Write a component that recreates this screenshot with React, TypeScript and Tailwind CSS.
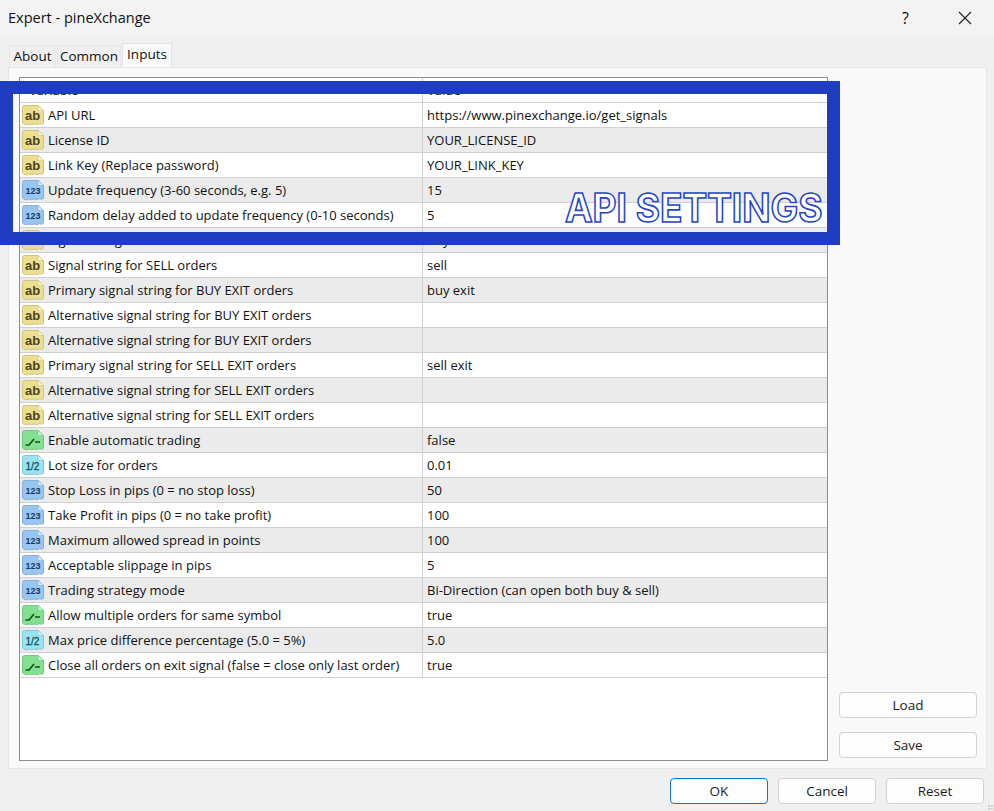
import React from 'react';

type Kind = 'ab' | 'int' | 'bool' | 'dbl';

const ROWS: [Kind, string, string][] = [
  ['ab', 'API URL', 'https://www.pinexchange.io/get_signals'],
  ['ab', 'License ID', 'YOUR_LICENSE_ID'],
  ['ab', 'Link Key (Replace password)', 'YOUR_LINK_KEY'],
  ['int', 'Update frequency (3-60 seconds, e.g. 5)', '15'],
  ['int', 'Random delay added to update frequency (0-10 seconds)', '5'],
  ['ab', 'Signal string for BUY orders', 'buy'],
  ['ab', 'Signal string for SELL orders', 'sell'],
  ['ab', 'Primary signal string for BUY EXIT orders', 'buy exit'],
  ['ab', 'Alternative signal string for BUY EXIT orders', ''],
  ['ab', 'Alternative signal string for BUY EXIT orders', ''],
  ['ab', 'Primary signal string for SELL EXIT orders', 'sell exit'],
  ['ab', 'Alternative signal string for SELL EXIT orders', ''],
  ['ab', 'Alternative signal string for SELL EXIT orders', ''],
  ['bool', 'Enable automatic trading', 'false'],
  ['dbl', 'Lot size for orders', '0.01'],
  ['int', 'Stop Loss in pips (0 = no stop loss)', '50'],
  ['int', 'Take Profit in pips (0 = no take profit)', '100'],
  ['int', 'Maximum allowed spread in points', '100'],
  ['int', 'Acceptable slippage in pips', '5'],
  ['int', 'Trading strategy mode', 'Bi-Direction (can open both buy & sell)'],
  ['bool', 'Allow multiple orders for same symbol', 'true'],
  ['dbl', 'Max price difference percentage (5.0 = 5%)', '5.0'],
  ['bool', 'Close all orders on exit signal (false = close only last order)', 'true'],
];

const COLORS: Record<Kind, { fill: string; edge: string; fold: string }> = {
  ab: { fill: '#ecdf92', edge: '#d3c477', fold: '#fbf6d2' },
  int: { fill: '#98c6f0', edge: '#82afdb', fold: '#dcebfa' },
  bool: { fill: '#84e091', edge: '#6ecb7e', fold: '#d2f4d7' },
  dbl: { fill: '#9ae3f0', edge: '#7ac8d9', fold: '#daf5fa' },
};

function TypeIcon({ kind }: { kind: Kind }) {
  const c = COLORS[kind];
  return (
    <svg width="22" height="21" viewBox="0 0 22 21" className="shrink-0">
      <path
        d="M2.5 .5H16L21.5 5.5V18C20 20.5 18 18 16.5 19C15 20.5 13 18.5 11 19.2C9 20.5 7.5 18.5 6 19.2C4.5 20.5 2 19.5 .5 18V2.5Q.5 .5 2.5 .5Z"
        fill={c.fill}
        stroke={c.edge}
      />
      <path d="M16 .5V5.5H21.5Z" fill={c.fold} stroke={c.edge} strokeWidth="0.6" />
      {kind === 'ab' && (
        <text x="3" y="14.5" fontSize="13" fontWeight="700" fill="#4a4420" fontFamily="'Liberation Sans', sans-serif">
          ab
        </text>
      )}
      {kind === 'int' && (
        <text x="3.5" y="14" fontSize="9" fontWeight="700" fill="#163a63" fontFamily="'Liberation Sans', sans-serif">
          123
        </text>
      )}
      {kind === 'dbl' && (
        <text x="3.5" y="14.5" fontSize="10" fontWeight="400" stroke="#14505f" strokeWidth="0.3" fill="#14505f" fontFamily="'Liberation Sans', sans-serif">
          1/2
        </text>
      )}
      {kind === 'bool' && (
        <path d="M3.5 15H7L12 9M13 12H18" fill="none" stroke="#14501f" strokeWidth="1.7" />
      )}
    </svg>
  );
}

function Btn({ label, primary, cls }: { label: string; primary?: boolean; cls: string }) {
  return (
    <button
      className={`${cls} h-[26px] rounded-[4px] border bg-[#fdfdfd] text-[13.5px] text-[#1b1b1b] ${
        primary ? 'border-[#0f74c8]' : 'border-[#d2d2d2]'
      }`}
    >
      {label}
    </button>
  );
}

export default function App() {
  return (
    <div className="relative flex h-[811px] w-[994px] flex-col overflow-hidden bg-[#f0f0f0] font-['Open_Sans',sans-serif] text-[13px] text-[#111111]">
      <div className="flex h-9 shrink-0 items-center bg-[#f3f3f3] pl-2 text-[14.5px]">
        <span className="flex-1">Expert - pineXchange</span>
        <span className="mr-[49px] text-[16px]">?</span>
        <svg width="14" height="14" viewBox="0 0 14 14" className="mr-[22px]">
          <path d="M1 1L13 13M13 1L1 13" stroke="#222" strokeWidth="1.1" />
        </svg>
      </div>

      <div className="flex h-[31px] shrink-0 items-end pl-[9px] text-[13.5px]">
        <div className="flex h-[22px] w-[47px] items-center justify-center border border-b-0 border-[#e6e6e6] bg-[#f0f0f0]">About</div>
        <div className="ml-px flex h-[22px] w-[64px] items-center justify-center border border-b-0 border-[#e6e6e6] bg-[#f0f0f0]">Common</div>
        <div className="-mb-px ml-px flex h-[25px] w-[50px] items-start justify-center border border-b-0 border-[#e2e2e2] bg-[#f9f9f9]">Inputs</div>
      </div>

      <div className="ml-2 flex h-[702px] w-[979px] shrink-0 border border-[#e6e6e6] bg-[#f9f9f9] pl-[10px] pt-[9px]">
        <div className="h-[684px] w-[809px] shrink-0 border border-[#8e8e8e] bg-white">
          <div className="flex h-[25px] border-b border-[#d0d0d0]">
            <div className="w-[403px] border-r border-[#d0d0d0] pl-[9px] leading-[24px]">Variable</div>
            <div className="pl-[4px] leading-[24px]">Value</div>
          </div>
          {ROWS.map(([kind, name, value], i) => (
            <div key={i} className={`flex h-[25px] border-b border-[#d0d0d0] ${i % 2 ? 'bg-[#ebebeb]' : 'bg-white'}`}>
              <div className="flex w-[403px] items-center gap-[4px] border-r border-[#d0d0d0] pl-[2px]">
                <TypeIcon kind={kind} />
                <span className="whitespace-nowrap pt-px">{name}</span>
              </div>
              <div className="flex items-center whitespace-nowrap pl-[4px] pt-px">{value}</div>
            </div>
          ))}
        </div>
        <div className="flex h-[684px] flex-1 flex-col items-start justify-end gap-[14px] pb-[3px] pl-[11px]">
          <Btn label="Load" cls="w-[138px]" />
          <Btn label="Save" cls="w-[138px]" />
        </div>
      </div>

      <div className="flex flex-1 items-start justify-end gap-[10px] pr-[10px] pt-[9px]">
        <Btn label="OK" primary cls="w-[98px]" />
        <Btn label="Cancel" cls="w-[98px]" />
        <Btn label="Reset" cls="w-[98px]" />
      </div>

      <div className="absolute bottom-[1px] right-[1px] grid grid-cols-2 gap-px">
        <span className="size-[2px] bg-[#cfcfcf]" />
        <span className="size-[2px] bg-[#cfcfcf]" />
        <span className="size-[2px] bg-[#cfcfcf]" />
        <span className="size-[2px] bg-[#cfcfcf]" />
      </div>

      {/* annotation painted over the dialog */}
      <div className="absolute left-0 top-[81px] h-[164px] w-[840px] border-[13px] border-[#1f3dc1]" />
      <div className="absolute left-[565px] top-[184px] origin-center scale-y-[1.08] whitespace-nowrap font-['Inter',sans-serif] text-[37px] font-bold leading-[48px] text-white [-webkit-text-stroke:1.5px_#2544c8]">
        API SETTINGS
      </div>
    </div>
  );
}
